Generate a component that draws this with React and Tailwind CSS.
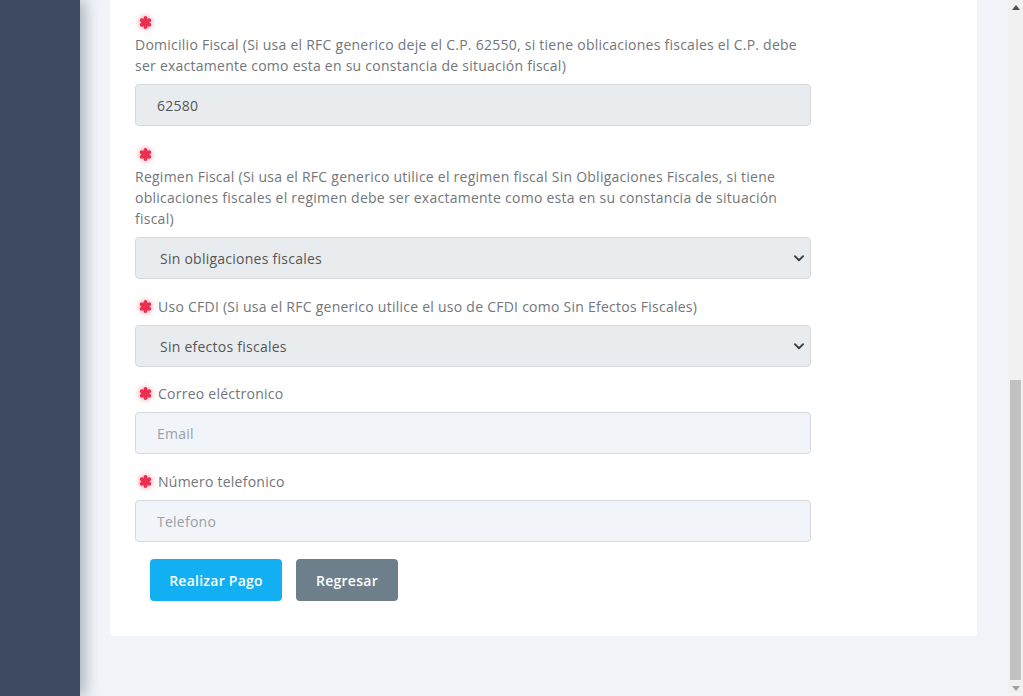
import React from "react";

const Req = () => (
  <span className="inline-flex items-center justify-center w-[15px] h-[15px] align-[-2px] drop-shadow-[0_0_3px_rgba(239,68,94,0.6)]">
    <svg viewBox="0 0 12 12" width="13" height="13">
      <g stroke="#ec2f4f" strokeWidth="3.6" strokeLinecap="round">
        <line x1="6" y1="1.9" x2="6" y2="10.1" />
        <line x1="2.5" y1="3.9" x2="9.5" y2="8.1" />
        <line x1="2.5" y1="8.1" x2="9.5" y2="3.9" />
      </g>
    </svg>
  </span>
);

const Chevron = () => (
  <svg viewBox="0 0 16 16" width="12" height="12" className="absolute right-[6px] top-1/2 -translate-y-1/2 pointer-events-none">
    <path d="M2.5 5.5 8 11l5.5-5.5" fill="none" stroke="#343a40" strokeWidth="2.4" strokeLinecap="round" strokeLinejoin="round" />
  </svg>
);

const inputBase =
  "w-full h-[42px] rounded-[4px] border border-[#d4d9df] px-[21px] text-[14px] tracking-[0.25px] text-[#555] outline-none placeholder:text-[#9a9fa6]";

const Field = ({ label, block, spacing = "mb-[16px]", children }) => (
  <div className={block ? "mb-[17px]" : spacing}>
    <div className="mb-2 text-[14px] leading-[21px] tracking-[0.25px] text-[#72767b]">
      {block ? (
        <>
          <div className="flex h-[23px] items-center pl-[3px]"><Req /></div>
          <div>{label}</div>
        </>
      ) : (
        <div className="flex h-[21px] items-center gap-[5px] pl-[3px]">
          <Req />
          <span>{label}</span>
        </div>
      )}
    </div>
    {children}
  </div>
);

const Select = ({ value }) => (
  <div className="relative">
    <select
      defaultValue={value}
      className={`${inputBase} appearance-none bg-[#e9ecef] pl-[24px]`}
    >
      <option>{value}</option>
    </select>
    <Chevron />
  </div>
);

export default function App() {
  return (
    <div
      className="flex h-[696px] w-[1023px] overflow-hidden bg-[#f1f4f8]"
      style={{ fontFamily: '"Open Sans", "Noto Sans", sans-serif' }}
    >
      <aside className="relative z-10 w-[80px] shrink-0 bg-[#3e4a62] shadow-[5px_0_14px_rgba(40,48,66,0.35)]" />

      <main className="flex-1 pl-[30px] pr-[31px]">
        <div className="rounded-b-[4px] bg-white pl-[25px] pr-[166px] pt-[11px] pb-[35px]">
          <Field block label="Domicilio Fiscal (Si usa el RFC generico deje el C.P. 62550, si tiene oblicaciones fiscales el C.P. debe ser exactamente como esta en su constancia de situación fiscal)">
            <input defaultValue="62580" readOnly className={`${inputBase} bg-[#e9ecef]`} />
          </Field>

          <Field block label="Regimen Fiscal (Si usa el RFC generico utilice el regimen fiscal Sin Obligaciones Fiscales, si tiene oblicaciones fiscales el regimen debe ser exactamente como esta en su constancia de situación fiscal)">
            <Select value="Sin obligaciones fiscales" />
          </Field>

          <Field label="Uso CFDI (Si usa el RFC generico utilice el uso de CFDI como Sin Efectos Fiscales)">
            <Select value="Sin efectos fiscales" />
          </Field>

          <Field label="Correo eléctronico" spacing="mb-[17px]">
            <input placeholder="Email" className={`${inputBase} bg-[#f1f4f8]`} />
          </Field>

          <Field label="Número telefonico" spacing="mb-[17px]">
            <input placeholder="Telefono" className={`${inputBase} bg-[#f1f4f8]`} />
          </Field>

          <div className="flex gap-[14px] pl-[15px]">
            <button className="h-[42px] w-[132px] rounded-[4px] bg-[#12aff3] text-[14px] font-semibold tracking-[0.25px] text-white">
              Realizar Pago
            </button>
            <button className="h-[42px] w-[102px] rounded-[4px] bg-[#6d7f8a] text-[14px] font-semibold tracking-[0.25px] text-white">
              Regresar
            </button>
          </div>
        </div>
      </main>

      <div className="flex w-[15px] shrink-0 flex-col bg-[#f1f1f1]">
        <div className="flex h-[15px] items-center justify-center">
          <svg viewBox="0 0 8 5" width="8" height="5"><path d="M0 5 4 0l4 5z" fill="#505050" /></svg>
        </div>
        <div className="mt-[365px] mx-[2px] h-[300px] bg-[#c1c1c1]" />
        <div className="mt-auto flex h-[15px] items-center justify-center">
          <svg viewBox="0 0 8 5" width="8" height="5"><path d="M0 0 4 5l4-5z" fill="#a3a3a3" /></svg>
        </div>
      </div>
    </div>
  );
}
